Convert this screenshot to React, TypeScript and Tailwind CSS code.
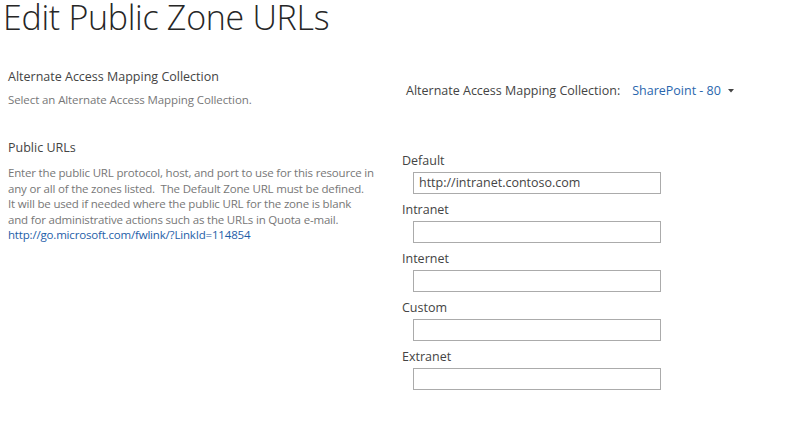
import React from "react";

const labels = ["Default", "Intranet", "Internet", "Custom", "Extranet"];

export default function App() {
  return (
    <div
      className="w-[791px] h-[421px] bg-white overflow-hidden text-[#444444]"
      style={{ fontFamily: '"Open Sans", "Noto Sans", Arial, sans-serif' }}
    >
      <h1 className="pl-[3px] text-[34px] leading-[34px] font-light tracking-[-0.3px] text-[#262626] whitespace-nowrap">
        Edit Public Zone URLs
      </h1>
      <div className="grid grid-cols-[394px_1fr]">
        <div className="pl-2 pr-2">
          <div className="mt-[34px] text-[12.5px] leading-[18px] text-[#444444] whitespace-nowrap">
            Alternate Access Mapping Collection
          </div>
          <div className="mt-[6px] text-[11.5px] leading-[16px] tracking-[-0.1px] text-[#777777] whitespace-nowrap">
            Select an Alternate Access Mapping Collection.
          </div>
          <div className="mt-[31px] text-[12.5px] leading-[18px] text-[#444444]">
            Public URLs
          </div>
          <div className="mt-[8px] text-[11.5px] leading-[15.5px] tracking-[-0.18px] text-[#777777] whitespace-nowrap">
            Enter the public URL protocol, host, and port to use for this resource in
            <br />
            any or all of the zones listed.&nbsp; The Default Zone URL must be defined.
            <br />
            It will be used if needed where the public URL for the zone is blank
            <br />
            and for administrative actions such as the URLs in Quota e-mail.
            <br />
            <a className="text-[#1e5ea8]" href="#">
              http://go.microsoft.com/fwlink/?LinkId=114854
            </a>
          </div>
        </div>
        <div className="pl-2">
          <div className="mt-[48px] ml-[4px] flex items-center text-[12.5px] leading-[18px] whitespace-nowrap">
            <span className="text-[#444444]">Alternate Access Mapping Collection:</span>
            <span className="ml-[12px] text-[#2a66ad]">SharePoint - 80</span>
            <svg className="ml-[7px]" width="6" height="4" viewBox="0 0 6 4">
              <path d="M0 0 H6 L3 3.5 Z" fill="#444444" />
            </svg>
          </div>
          <div className="mt-[52px] flex flex-col">
            {labels.map((l, i) => (
              <div key={l} className="flex flex-col">
                <div className="text-[12.5px] leading-[18px] text-[#444444]">{l}</div>
                <div className="mt-[2px] ml-[11px] mb-[7px] w-[248px] h-[22px] border border-[#ababab] flex items-center px-[5px] text-[12.5px] text-[#444444] whitespace-nowrap">
                  {i === 0 ? "http://intranet.contoso.com" : ""}
                </div>
              </div>
            ))}
          </div>
        </div>
      </div>
    </div>
  );
}
